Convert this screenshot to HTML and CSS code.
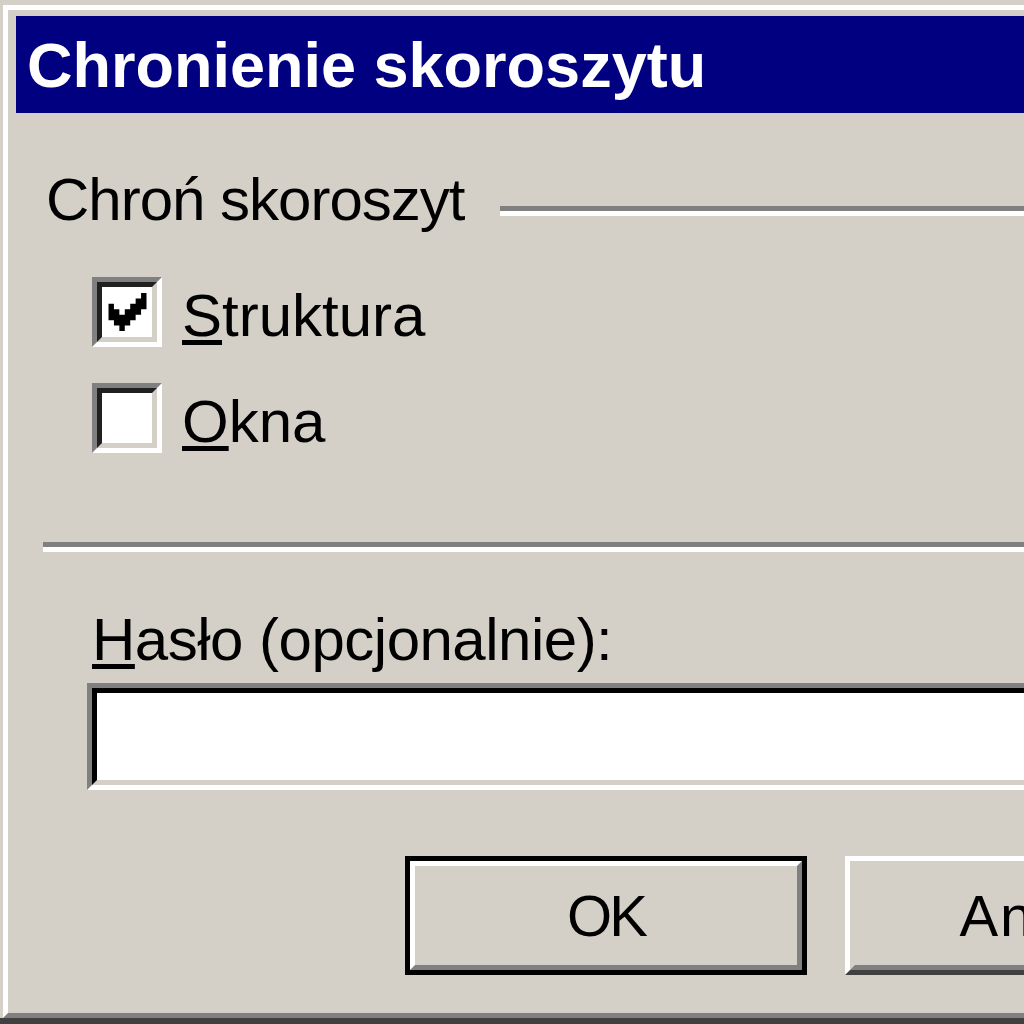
FILE: index.html
```html
<!DOCTYPE html>
<html lang="pl">
<head>
<meta charset="utf-8">
<title>Chronienie skoroszytu</title>
<link rel="stylesheet" href="styles.css">
</head>
<body>
<div class="window">
  <div class="frame">
    <div class="titlebar"><span class="title">Chronienie skoroszytu</span></div>
    <div class="content">
      <div class="group-head">
        <span class="group-label">Chroń skoroszyt</span>
        <div class="etched group-line"></div>
      </div>
      <div class="checks">
        <div class="check-row">
          <div class="checkbox"><div class="checkbox-inner">
            <svg class="tick" viewBox="0 0 7 7"><path d="M6 0H7V3H6V4H5V5H4V6H3V7H2V6H1V5H0V2H1V3H2V4H3V3H4V2H5V1H6Z" fill="#000"/></svg>
          </div></div>
          <span class="label"><u>S</u>truktura</span>
        </div>
        <div class="check-row">
          <div class="checkbox"><div class="checkbox-inner"></div></div>
          <span class="label"><u>O</u>kna</span>
        </div>
      </div>
      <div class="etched separator"></div>
      <div class="pw-label"><u>H</u>asło (opcjonalnie):</div>
      <div class="input"><div class="input-inner"></div></div>
      <div class="buttons">
        <div class="button default"><div class="button-inner ok">OK</div></div>
        <div class="button"><div class="button-inner cancel">Anuluj</div></div>
      </div>
    </div>
  </div>
</div>
</body>
</html>
```
FILE: styles.css
```css
html, body {
  margin: 0;
  padding: 0;
  width: 1024px;
  height: 1024px;
  overflow: hidden;
  background: #d4d0c8;
}

body {
  font-family: "Liberation Sans", Arial, sans-serif;
  color: #000;
}

.window {
  width: 1500px;
  height: 1024px;
  box-sizing: border-box;
  padding: 5px 0 0 3px;
  background: #d4d0c8;
  border-bottom: 6px solid #404040;
}

.frame {
  height: 100%;
  box-sizing: border-box;
  border-top: 5px solid #fff;
  border-left: 5px solid #fff;
  border-bottom: 5px solid #808080;
  padding: 6px 0 0 8px;
}

.titlebar {
  height: 97px;
  background: #000080;
  display: flex;
  align-items: center;
  padding-left: 11px;
}

.title {
  color: #fff;
  font-weight: bold;
  font-size: 63px;
  line-height: 63px;
  padding-top: 2px;
}

.content {
  padding: 57px 0 0 27px;
}

.group-head {
  display: flex;
  align-items: flex-start;
  gap: 36px;
}

.group-label,
.label,
.pw-label {
  font-size: 60px;
  line-height: 60px;
  white-space: nowrap;
}

.group-label {
  padding-left: 3px;
  letter-spacing: -1px;
}

.pw-label {
  letter-spacing: -0.5px;
}

.etched {
  height: 5px;
  background: #808080;
  border-bottom: 5px solid #fff;
}

.group-line {
  flex: 1;
  margin-top: 36px;
}

.checks {
  margin-top: 47px;
  padding-left: 49px;
  display: flex;
  flex-direction: column;
  gap: 36px;
}

.check-row {
  display: flex;
  align-items: center;
  gap: 20px;
  height: 70px;
}

.label {
  padding-top: 7px;
}

u {
  text-decoration: underline;
  text-decoration-thickness: 5px;
  text-underline-offset: 4px;
}

.checkbox {
  width: 70px;
  height: 70px;
  box-sizing: border-box;
  border: 5px solid;
  border-color: #808080 #fff #fff #808080;
}

.checkbox-inner {
  height: 100%;
  box-sizing: border-box;
  border: 5px solid;
  border-color: #202020 #d4d0c8 #d4d0c8 #202020;
  background: #fff;
  position: relative;
}

.tick {
  position: absolute;
  left: 6px;
  top: 6px;
  width: 39px;
  height: 38px;
}

.separator {
  margin-top: 89px;
}

.pw-label {
  margin-top: 58px;
  padding-left: 49px;
}

.input {
  margin-top: 13px;
  margin-left: 44px;
  width: 1200px;
  height: 107px;
  box-sizing: border-box;
  border: 5px solid;
  border-color: #808080 #fff #fff #808080;
}

.input-inner {
  height: 100%;
  box-sizing: border-box;
  border: 5px solid;
  border-color: #000 #d4d0c8 #d4d0c8 #000;
  background: #fff;
}

.buttons {
  margin-top: 66px;
  padding-left: 362px;
  display: flex;
  gap: 38px;
}

.button {
  width: 402px;
  height: 119px;
  box-sizing: border-box;
  border: 5px solid;
  border-color: #fff #404040 #404040 #fff;
}

.button.default {
  border-color: #000;
}

.button-inner {
  height: 100%;
  box-sizing: border-box;
  border: 5px solid;
  border-color: #d4d0c8 #808080 #808080 #d4d0c8;
  display: flex;
  align-items: center;
  justify-content: center;
  font-size: 58px;
  line-height: 58px;
}

.button-inner.ok {
  letter-spacing: -3px;
}

.button-inner.cancel {
  letter-spacing: 2px;
}

.button.default .button-inner {
  border-color: #fff #808080 #808080 #fff;
}
```
